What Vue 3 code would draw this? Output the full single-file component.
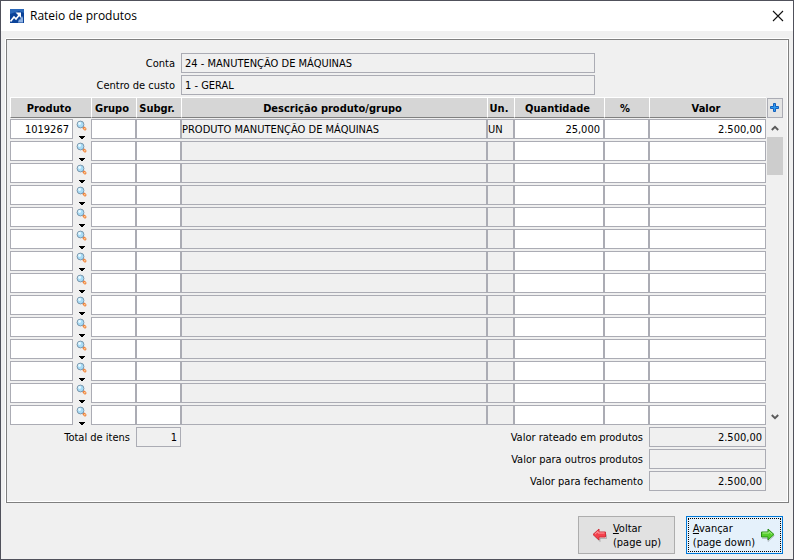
<script setup>
import { reactive, ref } from 'vue'

const columns = [
  { key: 'produto', title: 'Produto', align: 'right' },
  { key: 'grupo', title: 'Grupo', align: 'right' },
  { key: 'subgrupo', title: 'Subgr.', align: 'right' },
  { key: 'descricao', title: 'Descrição produto/grupo', readonly: true },
  { key: 'unidade', title: 'Un.', readonly: true },
  { key: 'quantidade', title: 'Quantidade', align: 'right' },
  { key: 'percentual', title: '%', align: 'right' },
  { key: 'valor', title: 'Valor', align: 'right' }
]

const rows = reactive(
  Array.from({ length: 14 }, () => ({
    produto: '', grupo: '', subgrupo: '', descricao: '',
    unidade: '', quantidade: '', percentual: '', valor: ''
  }))
)
Object.assign(rows[0], {
  produto: '1019267',
  descricao: 'PRODUTO MANUTENÇÃO DE MÁQUINAS',
  unidade: 'UN',
  quantidade: '25,000',
  valor: '2.500,00'
})

const conta = ref('24 - MANUTENÇÃO DE MÁQUINAS')
const centro = ref('1 - GERAL')
const totals = [
  { id: 'rateado', label: 'Valor rateado em produtos', value: '2.500,00' },
  { id: 'outros', label: 'Valor para outros produtos', value: '' },
  { id: 'fechamento', label: 'Valor para fechamento', value: '2.500,00' }
]
</script>

<template>
  <main class="window">
    <header class="titlebar">
      <svg class="logo" viewBox="0 0 14 14" aria-hidden="true">
        <rect width="14" height="14" fill="#0b4298" />
        <path d="M0 0h14v4L9 2 0 5z" fill="#2a68ba" />
        <path d="M.5 12.500 4 8l2 2 4-5" fill="none" stroke="#fff" stroke-width="1.600" />
        <path d="M5.500 3.500H11V9z" fill="#fff" />
        <path d="M8 13.500l1-3.500 1 1 1.500-4 .5 2 1-2v6.500z" fill="#8fb2e2" />
      </svg>
      <h1>Rateio de produtos</h1>
      <button class="close" type="button" aria-label="Fechar">
        <svg viewBox="0 0 12 12" aria-hidden="true"><path d="M1 1l10 10M11 1L1 11" stroke="#111" stroke-width="1.100" /></svg>
      </button>
    </header>

    <section class="panel">
      <div class="form">
        <label for="conta">Conta</label>
        <input id="conta" v-model="conta" class="field" readonly>
        <label for="centro">Centro de custo</label>
        <input id="centro" v-model="centro" class="field" readonly>
      </div>

      <div class="grid">
        <table>
          <colgroup>
            <col v-for="c in columns" :key="c.key" :class="'col-' + c.key">
          </colgroup>
          <thead>
            <tr>
              <th v-for="c in columns" :id="'th-' + c.key" :key="c.key">{{ c.title }}</th>
            </tr>
          </thead>
          <tbody>
            <tr v-for="(row, i) in rows" :key="i">
              <td v-for="c in columns" :key="c.key">
                <div class="cell">
                  <input
                    v-model="row[c.key]"
                    :class="{ right: c.align === 'right' }"
                    :readonly="c.readonly"
                    :aria-labelledby="'th-' + c.key"
                  >
                  <button v-if="c.key === 'produto'" class="lookup" type="button" aria-label="Pesquisar produto">
                    <svg viewBox="0 0 18 20" aria-hidden="true">
                      <path d="M9.500 7.500l1.500 1.500" stroke="#8d9299" stroke-width="1.600" />
                      <path d="M11 9l1 1" stroke="#ee8440" stroke-width="3" stroke-linecap="round" />
                      <circle cx="11.800" cy="9.800" r=".8" fill="#ffd9a0" />
                      <circle cx="7.500" cy="5.500" r="3.400" fill="#a8dcf7" stroke="#7d98ac" />
                      <circle cx="6.600" cy="4.500" r="1.400" fill="#e8f9ff" />
                      <path d="M6 17h6v1h-1v1h-1v1H8v-1H7v-1H6z" fill="#000" />
                    </svg>
                  </button>
                </div>
              </td>
            </tr>
          </tbody>
        </table>

        <div class="side">
          <button class="add" type="button" aria-label="Adicionar">
            <svg viewBox="0 0 10 10" aria-hidden="true"><path d="M3.500.5h2v3h3v2h-3v3h-2v-3h-3v-2h3z" fill="#2f9bf0" stroke="#1560bd" /></svg>
          </button>
          <div class="scroll">
            <button type="button" aria-label="Rolar para cima">
              <svg viewBox="0 0 8 6" aria-hidden="true"><path d="M.8 5L4 1.800 7.200 5" fill="none" stroke="#5a5a5a" stroke-width="1.900" /></svg>
            </button>
            <div class="track"><div class="thumb"></div></div>
            <button type="button" aria-label="Rolar para baixo">
              <svg viewBox="0 0 8 6" aria-hidden="true"><path d="M.8 1L4 4.200 7.200 1" fill="none" stroke="#5a5a5a" stroke-width="1.900" /></svg>
            </button>
          </div>
        </div>
      </div>

      <div class="summary">
        <div class="items">
          <label for="itens">Total de itens</label>
          <input id="itens" class="field right" value="1" readonly>
        </div>
        <div class="totals">
          <template v-for="t in totals" :key="t.id">
            <label :for="t.id">{{ t.label }}</label>
            <input :id="t.id" class="field right" :value="t.value" readonly>
          </template>
        </div>
      </div>
    </section>

    <footer class="actions">
      <button class="action" type="button">
        <svg viewBox="0 0 16 14" aria-hidden="true">
          <path d="M3 8.500l5 5v-3h6.500v-4" fill="none" stroke="#000" stroke-opacity=".2" />
          <path d="M1 6.500l6-5.500v3h6.500v5H7v3z" fill="#f4414d" stroke="#d0303a" stroke-linejoin="round" />
          <path d="M3 6.200l3-2.800v1.600h6.500" fill="none" stroke="#ff9da2" />
        </svg>
        <span><u>V</u>oltar<br>(page up)</span>
      </button>
      <button class="action primary" type="button">
        <span><u>A</u>vançar<br>(page down)</span>
        <svg viewBox="0 0 16 14" aria-hidden="true">
          <path d="M2 10.500h6v3l6.500-6" fill="none" stroke="#000" stroke-opacity=".2" />
          <path d="M14 6.500L8 1v3H1.500v5H8v3z" fill="#55cf2c" stroke="#2b8d16" stroke-linejoin="round" />
          <path d="M2.500 5H9V3.500l3 2.700" fill="none" stroke="#a9f08a" />
        </svg>
      </button>
    </footer>
  </main>
</template>

<style>
body {
  margin: 0;
  background: #f0f0f0;
}
</style>

<style scoped>
.window {
  box-sizing: border-box;
  display: flex;
  flex-direction: column;
  min-height: 100vh;
  border: 1px solid #50515b;
  background: #f0f0f0;
  color: #000;
  font: 11px/14px Tahoma, "DejaVu Sans Condensed", sans-serif;
}
button,
input {
  box-sizing: border-box;
  margin: 0;
  padding: 0;
  border: 0;
  border-radius: 0;
  background: none;
  color: inherit;
  font: inherit;
  outline: 0;
}
svg {
  display: block;
}
.titlebar {
  display: flex;
  align-items: center;
  height: 30px;
  padding: 0 9px;
  background: #fff;
}
.logo {
  width: 14px;
  height: 14px;
}
h1 {
  flex: 1;
  margin: 0 0 0 6px;
  font: 12px/16px "Segoe UI", "Open Sans", sans-serif;
}
.close svg {
  width: 12px;
  height: 12px;
}
.panel {
  margin: 8px 4px 0 5px;
  padding: 12px 5px 11px 3px;
  border: 1px solid #7f7f7f;
  box-shadow: 0 -1px #fff, -1px 0 #fff, inset -1px -1px #fff;
}
.form {
  display: grid;
  grid-template-columns: 165px 1fr;
  gap: 2px 6px;
  align-items: center;
  padding: 1px 188px 2px 0;
}
label {
  padding-top: 2px;
  text-align: right;
  white-space: nowrap;
}
.field {
  width: 100%;
  height: 20px;
  padding: 1px 3px 0;
  border: 1px solid #abacb4;
}
.right {
  text-align: right;
}
.grid {
  display: flex;
  gap: 1px;
}
table {
  flex: 1;
  width: 100%;
  table-layout: fixed;
  border-spacing: 0;
}
.col-produto { width: 81px; }
.col-grupo,
.col-subgrupo,
.col-percentual { width: 45px; }
.col-unidade { width: 27px; }
.col-quantidade { width: 90px; }
.col-valor { width: 117px; }
th {
  box-sizing: border-box;
  height: 21px;
  padding: 2px 4px 0 0;
  border: solid #fff;
  border-width: 1px 0 1px 1px;
  border-bottom-color: #808080;
  background: #d6d6d6;
  font-weight: bold;
  line-height: 14px;
  white-space: nowrap;
}
td {
  padding: 1px 0;
}
.cell {
  display: flex;
  height: 20px;
}
.cell input {
  flex: 1;
  width: 0;
  min-width: 0;
  padding-top: 1px;
  border: 1px solid #abacb4;
  background: #fff;
}
.cell input.right {
  padding-right: 3px;
}
.cell input:read-only {
  background: #f0f0f0;
}
.lookup svg {
  width: 18px;
  height: 20px;
}
.side {
  display: flex;
  flex-direction: column;
  width: 16px;
  padding-top: 1px;
}
.add {
  display: grid;
  place-items: center;
  height: 20px;
  border: 1px solid #abacb4;
  background: #e4e4e4;
}
.add svg {
  width: 10px;
  height: 10px;
}
.scroll {
  display: flex;
  flex: 1;
  flex-direction: column;
  margin-top: 1px;
}
.scroll button {
  display: grid;
  place-items: center;
  height: 18px;
}
.scroll svg {
  width: 8px;
  height: 6px;
}
.track {
  flex: 1;
}
.thumb {
  height: 38px;
  background: #cdcdcd;
}
.summary {
  display: flex;
  justify-content: space-between;
  align-items: flex-start;
  padding: 1px 17px 0 0;
}
.items {
  display: grid;
  grid-template-columns: 120px 45px;
  gap: 6px;
  align-items: center;
}
.totals {
  display: grid;
  grid-template-columns: auto 117px;
  gap: 2px 6px;
  align-items: center;
}
.actions {
  display: flex;
  justify-content: flex-end;
  gap: 11px;
  margin-top: auto;
  padding: 12px 10px 5px;
}
.action {
  display: flex;
  align-items: center;
  justify-content: center;
  gap: 5px;
  width: 97px;
  height: 38px;
  border: 1px solid #adadad;
  background: #e1e1e1;
  text-align: left;
  white-space: nowrap;
}
.action span {
  padding-top: 2px;
}
.action svg {
  width: 16px;
  height: 14px;
}
.primary {
  border-color: #0078d7;
  background: #e5f1fb;
  outline: 1px dotted #000;
  outline-offset: -3px;
}
</style>
